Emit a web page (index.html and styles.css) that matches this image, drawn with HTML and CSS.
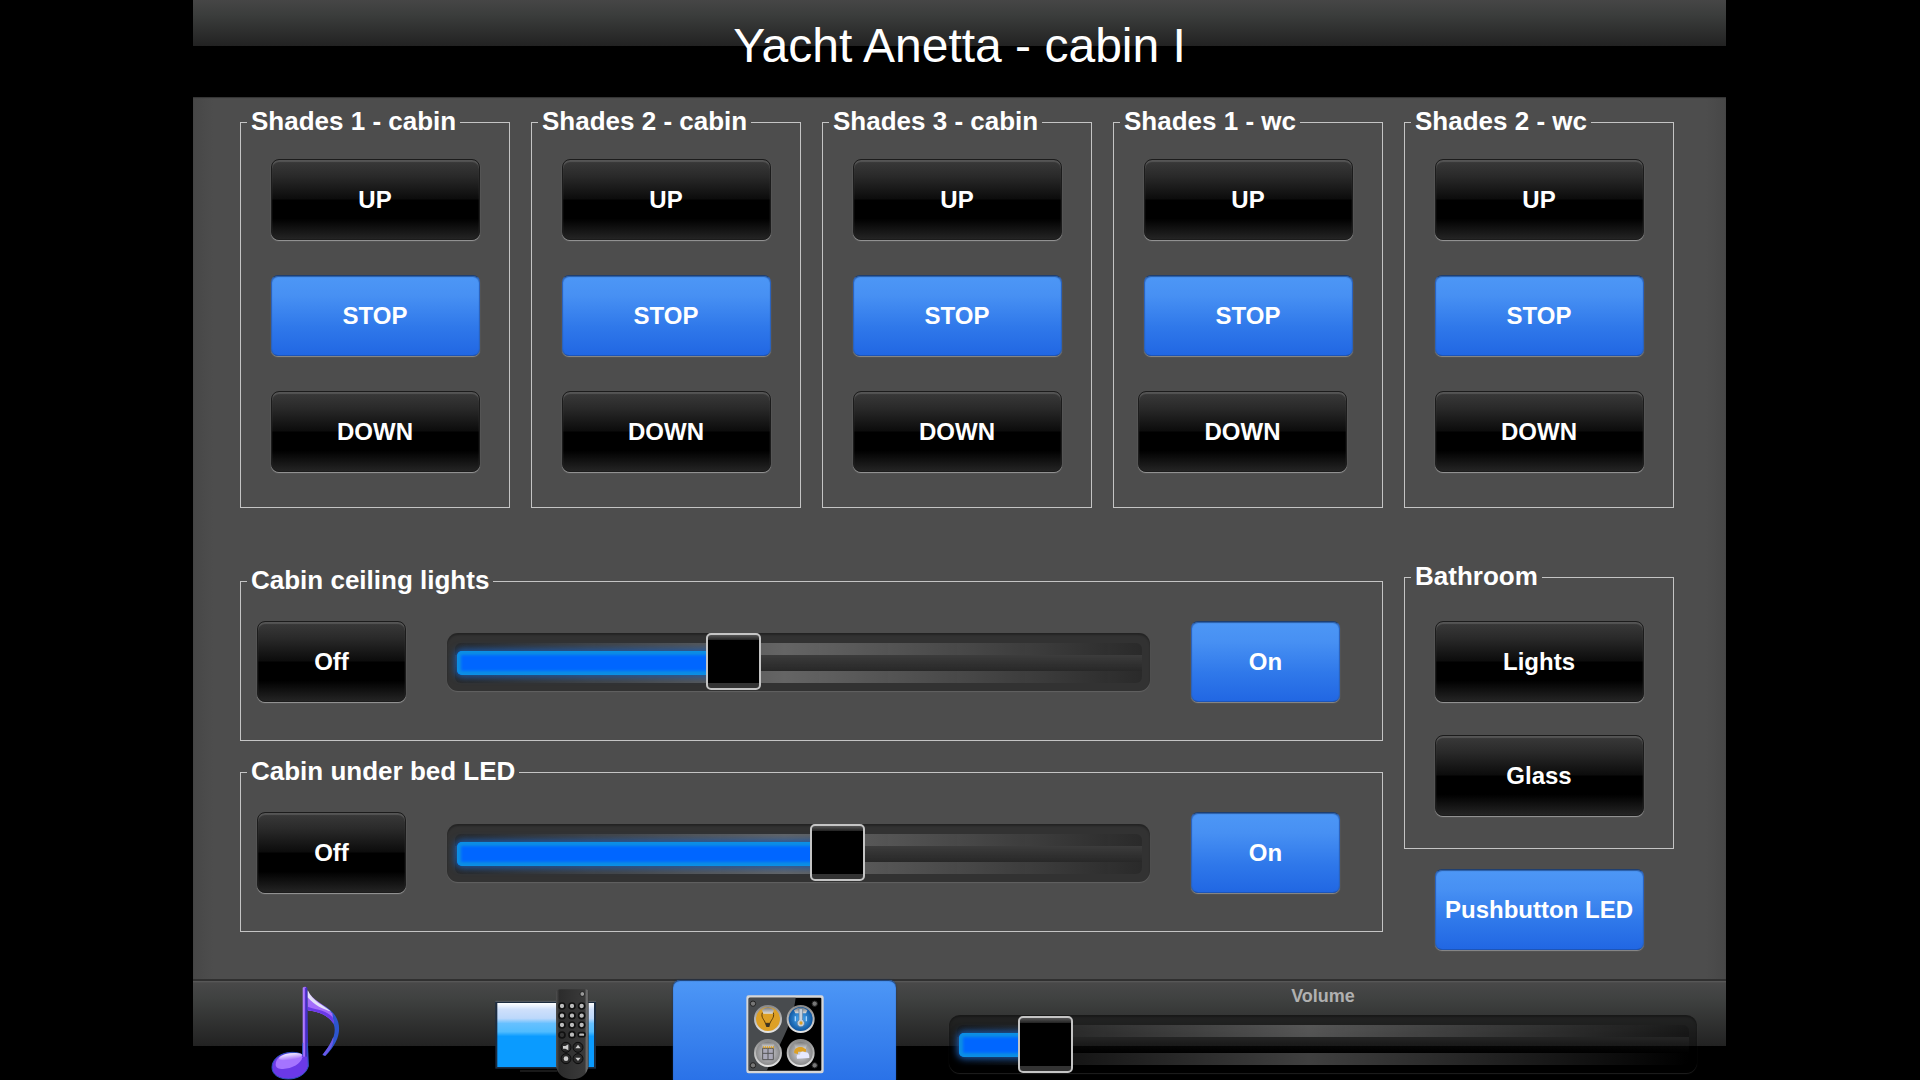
FILE: index.html
```html
<!DOCTYPE html>
<html lang="en">
<head>
    <meta charset="UTF-8">
    <meta name="viewport" content="width=device-width, initial-scale=1.0">
    <title>Yacht Anetta - cabin I</title>
    <link rel="stylesheet" href="styles.css">
</head>
<body>

    <div class="panel">
        <header class="header">
            <h1>Yacht Anetta - cabin I</h1>
        </header>

        <main class="main">
            <!-- Shades -->
            <div class="shades">
                <fieldset class="group shade">
                    <legend>Shades 1 - cabin</legend>
                    <button class="button" type="button">UP</button>
                    <button class="button active" type="button">STOP</button>
                    <button class="button" type="button">DOWN</button>
                </fieldset>
                <fieldset class="group shade">
                    <legend>Shades 2 - cabin</legend>
                    <button class="button" type="button">UP</button>
                    <button class="button active" type="button">STOP</button>
                    <button class="button" type="button">DOWN</button>
                </fieldset>
                <fieldset class="group shade">
                    <legend>Shades 3 - cabin</legend>
                    <button class="button" type="button">UP</button>
                    <button class="button active" type="button">STOP</button>
                    <button class="button" type="button">DOWN</button>
                </fieldset>
                <fieldset class="group shade">
                    <legend>Shades 1 - wc</legend>
                    <button class="button" type="button">UP</button>
                    <button class="button active" type="button">STOP</button>
                    <button class="button button-left" type="button">DOWN</button>
                </fieldset>
                <fieldset class="group shade">
                    <legend>Shades 2 - wc</legend>
                    <button class="button" type="button">UP</button>
                    <button class="button active" type="button">STOP</button>
                    <button class="button" type="button">DOWN</button>
                </fieldset>
            </div>

            <!-- Lights -->
            <div class="lights">
                <div class="dimmers">
                    <fieldset class="group dimmer">
                        <legend>Cabin ceiling lights</legend>
                        <button class="button small" type="button">Off</button>
                        <div class="slider" style="--value: 0.4">
                            <input type="range" min="0" max="100" value="40" aria-label="Cabin ceiling lights">
                        </div>
                        <button class="button small active" type="button">On</button>
                    </fieldset>
                    <fieldset class="group dimmer">
                        <legend>Cabin under bed LED</legend>
                        <button class="button small" type="button">Off</button>
                        <div class="slider" style="--value: 0.56">
                            <input type="range" min="0" max="100" value="56" aria-label="Cabin under bed LED">
                        </div>
                        <button class="button small active" type="button">On</button>
                    </fieldset>
                </div>
                <div class="side">
                    <fieldset class="group bathroom">
                        <legend>Bathroom</legend>
                        <button class="button" type="button">Lights</button>
                        <button class="button" type="button">Glass</button>
                    </fieldset>
                    <button class="button active" type="button">Pushbutton LED</button>
                </div>
            </div>
        </main>

        <footer class="footer">
            <nav class="tabs">
                <a class="tab" href="#music" aria-label="Music">
                    <svg viewBox="76 78 306 282">
                        <defs>
                            <linearGradient id="flag" x1="0" y1="0" x2="1" y2="1">
                                <stop offset="0" stop-color="#e9dcff"/>
                                <stop offset="0.3" stop-color="#9a62f5"/>
                                <stop offset="0.55" stop-color="#2f55d0"/>
                                <stop offset="1" stop-color="#2a55cc"/>
                            </linearGradient>
                            <linearGradient id="stem" x1="0" y1="0" x2="1" y2="0">
                                <stop offset="0" stop-color="#b184ff"/>
                                <stop offset="0.55" stop-color="#9358f5"/>
                                <stop offset="0.6" stop-color="#4d2bc0"/>
                                <stop offset="1" stop-color="#3a35c8"/>
                            </linearGradient>
                            <linearGradient id="gloss" x1="0" y1="0" x2="0" y2="1">
                                <stop offset="0" stop-color="#f2ecff"/>
                                <stop offset="1" stop-color="#a270fb"/>
                            </linearGradient>
                        </defs>
                        <path d="M231 90C244 124 283 132 307 158C336 192 332 240 284 288L275 285C300 254 320 222 309 193C298 168 264 155 231 151Z" fill="url(#flag)"/>
                        <path d="M231 100C246 128 280 140 305 160L309 190C290 164 260 154 231 151Z" fill="#a46cfb"/>
                        <path d="M231 92C245 124 278 134 302 155C280 149 250 136 231 112Z" fill="#e3e0f8"/>
                        <path d="M231 140C262 150 290 152 306 172L310 193C296 168 264 155 231 151Z" fill="#6b39e8"/>
                        <path d="M283 287L276 284C291 264 301 249 308 230C310 252 301 268 283 287Z" fill="#6a58e8"/>
                        <path d="M216 83Q223 78 230 83L233 320Q230 331 216 341Z" fill="url(#stem)"/>
                        <path d="M216 285V250H230L233 318C227 342 202 357 173 357C143 357 124 343 124 322C124 296 151 277 185 277C199 277 209 280 216 285Z" fill="#6b39e8" stroke="#2953bb" stroke-width="3"/>
                        <path d="M218 84V290H229V84Z" fill="url(#stem)"/>
                        <path d="M135 315C134 293 157 280 184 280C202 280 213 286 215 292C211 312 184 326 157 327C143 327 136 323 135 315Z" fill="#a574ff"/>
                        <ellipse cx="180" cy="290" rx="35" ry="10" fill="url(#gloss)" transform="rotate(-8 180 290)"/>
                    </svg>
                </a>
                <a class="tab" href="#tv" aria-label="TV">
                    <svg viewBox="793 78 306 282">
                        <defs>
                            <linearGradient id="screen" x1="0" y1="0" x2="0" y2="1">
                                <stop offset="0" stop-color="#fff"/>
                                <stop offset="0.1" stop-color="#cfe0fb"/>
                                <stop offset="0.24" stop-color="#bcd8fb"/>
                                <stop offset="0.32" stop-color="#66c0ff"/>
                                <stop offset="0.45" stop-color="#4fbcff"/>
                                <stop offset="0.52" stop-color="#0a9bff"/>
                                <stop offset="1" stop-color="#0a9bff"/>
                            </linearGradient>
                            <linearGradient id="remote" x1="0" y1="0" x2="1" y2="0">
                                <stop offset="0" stop-color="#505050"/>
                                <stop offset="0.1" stop-color="#2c2c2c"/>
                                <stop offset="0.88" stop-color="#3a3a3a"/>
                                <stop offset="0.95" stop-color="#777"/>
                                <stop offset="1" stop-color="#333"/>
                            </linearGradient>
                        </defs>
                        <rect x="794" y="124" width="302" height="202" fill="#1c2c40"/>
                        <path d="M794 124H1096" stroke="#777" stroke-width="2"/>
                        <rect x="800" y="129" width="290" height="192" fill="url(#screen)"/>
                        <path d="M868 333H980" stroke="#222" stroke-width="5"/>
                        <path d="M976 96Q978 88 990 88H1062Q1074 88 1074 96V318Q1066 357 1025 358Q984 357 976 318Z" fill="url(#remote)"/>
                        <circle cx="1055" cy="102" r="7" fill="#999" stroke="#111" stroke-width="2"/>
                        <g fill="#bbb" stroke="#101010" stroke-width="5">
                            <circle cx="994" cy="138" r="9"/><circle cx="1024" cy="138" r="9"/><circle cx="1053" cy="138" r="9"/>
                            <circle cx="994" cy="167" r="9"/><circle cx="1024" cy="167" r="9"/><circle cx="1053" cy="167" r="9"/>
                            <circle cx="994" cy="195" r="9"/><circle cx="1024" cy="195" r="9"/><circle cx="1053" cy="195" r="9"/>
                            <circle cx="994" cy="225" r="9" fill="#333"/><circle cx="1024" cy="224" r="9"/><rect x="1043" y="218" width="20" height="12" rx="6"/>
                        </g>
                        <g fill="#2a2a2a" stroke="#0c0c0c" stroke-width="3">
                            <circle cx="1006" cy="262" r="15"/><circle cx="1042" cy="262" r="15"/>
                            <circle cx="1006" cy="296" r="15"/><circle cx="1042" cy="296" r="15"/>
                        </g>
                        <g fill="#ccc">
                            <path d="M997 258H1004L1013 253V271L1004 266H997Z"/>
                            <path d="M1034 265L1042 254L1050 265Z"/>
                            <circle cx="1006" cy="296" r="7"/>
                            <path d="M1034 293L1042 303L1050 293Z"/>
                        </g>
                    </svg>
                </a>
                <a class="tab active" href="#lights" aria-label="Lights and shades" aria-current="page">
                    <svg viewBox="220 48 306 282">
                        <defs>
                            <linearGradient id="ring" x1="0" y1="0" x2="0" y2="1">
                                <stop offset="0" stop-color="#8a8a8a"/>
                                <stop offset="1" stop-color="#e4e4e4"/>
                            </linearGradient>
                            <linearGradient id="shine" x1="0" y1="0" x2="0" y2="1">
                                <stop offset="0" stop-color="#777"/>
                                <stop offset="1" stop-color="#ddd"/>
                            </linearGradient>
                            <radialGradient id="cold">
                                <stop offset="0" stop-color="#4cb2ff"/>
                                <stop offset="1" stop-color="#0c4f98"/>
                            </radialGradient>
                            <radialGradient id="grey">
                                <stop offset="0" stop-color="#d5d5dc"/>
                                <stop offset="1" stop-color="#858585"/>
                            </radialGradient>
                        </defs>
                        <rect x="257" y="76" width="232" height="234" rx="7" fill="#d6d6d6"/>
                        <rect x="264" y="83" width="218" height="219" rx="3" fill="#000"/>
                        <path d="M267 83H405C396 160 362 214 318 302H264V86Z" fill="#484b4e"/>
                        <g fill="#777" stroke="#222" stroke-width="3">
                            <circle cx="277" cy="101" r="8"/><circle cx="462" cy="101" r="8"/>
                            <circle cx="277" cy="286" r="8"/><circle cx="462" cy="286" r="8"/>
                        </g>
                        <g stroke="url(#ring)" stroke-width="6">
                            <circle cx="322" cy="147" r="39" fill="#dda025"/>
                            <circle cx="420" cy="147" r="39" fill="url(#cold)"/>
                            <circle cx="322" cy="249" r="39" fill="url(#grey)"/>
                            <circle cx="420" cy="249" r="39" fill="url(#grey)"/>
                        </g>
                        <g fill="url(#shine)">
                            <path d="M304 119Q322 104 340 119L336 131H308Z"/>
                            <path d="M400 121Q420 104 440 121L436 130H404Z"/>
                            <path d="M303 223Q322 208 341 223L337 232H307Z"/>
                            <path d="M400 223Q420 208 440 223L434 238H406Z"/>
                        </g>
                        <!-- bulb -->
                        <path d="M305 128C300 144 312 149 314 160H328C331 149 342 144 338 128" fill="none" stroke="#5a3a08" stroke-width="3"/>
                        <path d="M313 160H329L326 171H317Z" fill="#3c3424"/>
                        <!-- thermometer -->
                        <path d="M415 116H426V150A11 11 0 1 1 415 150Z" fill="#c5d0dc" stroke="#55718e" stroke-width="2"/>
                        <circle cx="421" cy="159" r="5" fill="#dda025"/>
                        <path d="M404 139V154M437 139V154" stroke="#a6d4ff" stroke-width="4"/>
                        <!-- shades -->
                        <path d="M306 235H338V269H306ZM322 235V269M306 250H338" fill="#aaa9b8" stroke="#555" stroke-width="3"/>
                        <path d="M307 232H340" stroke="#dda025" stroke-width="6" stroke-dasharray="4 2"/>
                        <!-- sun and cloud -->
                        <path d="M401 250C398 236 412 228 426 232L436 238V245H412V252Z" fill="#dda025"/>
                        <path d="M409 266Q405 252 418 254Q420 240 433 247Q447 245 446 264Z" fill="#e7e9ff"/>
                    </svg>
                </a>
            </nav>
            <div class="volume">
                <label for="volume">Volume</label>
                <div class="slider" style="--value: 0.1">
                    <input type="range" id="volume" min="0" max="100" value="10">
                </div>
            </div>
        </footer>
    </div>

    <script>
        // Keep the blue bar in step with the handle
        document.querySelectorAll('.slider input').forEach(function(input) {
            input.addEventListener('input', function() {
                input.parentElement.style.setProperty('--value', input.value / 100);
            });
        });
    </script>

</body>
</html>
```
FILE: styles.css
```css
*,
*::before,
*::after {
    box-sizing: border-box;
}
body {
    font-family: "Liberation Sans", Arial, sans-serif;
    margin: 0;
    background-color: #000;
    color: #fff;
}
.panel {
    display: flex;
    flex-direction: column;
    min-height: 100vh;
    margin: 0 194px 0 193px;
}

/* Header */
.header {
    height: 97px;
    background: linear-gradient(#464646, #3b3d3c 15px, #222 46px, #000 46px);
}
h1 {
    margin: 0;
    font-size: 48px;
    font-weight: normal;
    line-height: 92px;
    text-align: center;
}

/* Main */
.main {
    flex: 1;
    padding: 9px 52px 24px 47px;
    background: linear-gradient(to right, #474747, #4d4d4d 20px, #4d4d4d calc(100% - 20px), #474747);
    box-shadow: inset 0 1px 1px #333;
}
.shades,
.lights {
    display: grid;
    grid-template-columns: repeat(5, 1fr);
    column-gap: 21px;
}
.lights {
    margin-top: 53px;
}
.group {
    min-width: 0;
    margin: 0;
    border: 1px solid #c4c4c4;
}
legend {
    margin-left: 6px;
    padding: 0 4px 3px;
    font-size: 26px;
    font-weight: bold;
    line-height: 30px;
}
.shade {
    display: flex;
    flex-direction: column;
    align-items: center;
    gap: 35px;
    padding: 20px 24px 35px;
}
.shade legend,
.bathroom legend {
    margin-left: -18px;
}
.dimmers {
    grid-column: span 4;
    display: flex;
    flex-direction: column;
    gap: 15px;
    padding-top: 4px;
}
.dimmer {
    display: flex;
    align-items: center;
    gap: 41px;
    padding: 23px 42px 38px 16px;
}
.dimmer legend {
    margin-left: -10px;
}
.side {
    display: flex;
    flex-direction: column;
    align-items: center;
    gap: 20px;
}
.bathroom {
    display: flex;
    flex-direction: column;
    align-items: center;
    gap: 33px;
    width: 100%;
    padding: 27px 24px 32px;
}

/* Buttons */
.button {
    width: 209px;
    height: 81px;
    padding: 0;
    border: 1px solid #1c1c1c;
    border-radius: 8px;
    background: linear-gradient(#3a3a3a, #2a2a2a 20%, #0c0c0c 49%, #000 51%, #000 74%, #242424);
    box-shadow: inset 0 2px 1px #555, 0 1px 1px #9a9a9a;
    color: #fff;
    font-family: inherit;
    font-size: 24px;
    font-weight: bold;
    cursor: pointer;
}
.button.small {
    width: 149px;
}
.button.active {
    border-color: #1f3f70 #2a62bd #1d55b8;
    border-radius: 7px;
    background: linear-gradient(#4d97f6, #4790f3 25%, #2f78ea 65%, #2167e3);
    box-shadow: inset 0 1px 1px #2b5ca5, 0 1px 1px #8c8c8c;
}
.button-left {
    align-self: flex-start;
}

/* Sliders */
.slider {
    position: relative;
    flex: 1;
    height: 58px;
    border-radius: 11px;
    background-color: rgba(0, 0, 0, 0.34);
    box-shadow: inset 0 2px 2px rgba(0, 0, 0, 0.3), 0 1px 1px rgba(255, 255, 255, 0.12);
}
.slider::before {
    content: "";
    position: absolute;
    inset: 10px 8px 8px;
    border-radius: 6px;
    background:
        linear-gradient(rgba(255, 255, 255, 0.05), rgba(0, 0, 0, 0.2)) 0 12px / 100% 16px no-repeat,
        linear-gradient(to right, rgba(0, 0, 0, 0.2), rgba(255, 255, 255, 0.25) 48%, rgba(0, 0, 0, 0.15)) 0 0 / 100% 12px no-repeat,
        linear-gradient(to right, rgba(0, 0, 0, 0.2), rgba(255, 255, 255, 0.25) 48%, rgba(0, 0, 0, 0.15)) 0 28px / 100% 12px no-repeat;
}
.slider::after {
    content: "";
    position: absolute;
    top: 18px;
    left: 10px;
    width: calc((100% - 55px) * var(--value) + 10px);
    height: 24px;
    border-radius: 5px;
    background-color: #06f;
    box-shadow: inset 0 0 3px 4px #0c8fe4, 0 0 7px 2px #1c58a8;
}
.slider input {
    position: relative;
    z-index: 1;
    display: block;
    width: 100%;
    height: 58px;
    margin: 0;
    background: none;
    appearance: none;
    -webkit-appearance: none;
    cursor: pointer;
}
.slider input::-webkit-slider-thumb {
    -webkit-appearance: none;
    box-sizing: border-box;
    width: 55px;
    height: 57px;
    border: 2px solid #c4c4c4;
    border-radius: 5px;
    background: linear-gradient(#555, #222 5px, #000 5px, #000 48px, #333 48px, #333);
}

/* Footer */
.footer {
    display: flex;
    padding: 1px 29px 0 2px;
    background: linear-gradient(#303030 2px, #5c5c5c 2px, #484848 4px, #3f4140 20px, #222 67px, #000 67px);
}
.tabs {
    display: flex;
    gap: 16px;
}
.tab {
    display: flex;
    align-items: flex-end;
    justify-content: center;
    width: 223px;
    height: 100px;
    border-radius: 7px 7px 0 0;
}
.tab.active {
    background: linear-gradient(#4d97f6, #2a72e8);
    box-shadow: inset 0 1px 1px #1f3f70, 0 0 2px #163463;
}
.tab svg {
    width: 102px;
    height: 94px;
}
.volume {
    flex: 1;
    display: flex;
    flex-direction: column;
    gap: 9px;
    margin-left: 53px;
    padding: 6px 0 7px;
}
.volume .slider {
    flex: none;
}
.volume label {
    color: #b0b0b0;
    font-size: 18px;
    font-weight: bold;
    line-height: 20px;
    text-align: center;
}
```
